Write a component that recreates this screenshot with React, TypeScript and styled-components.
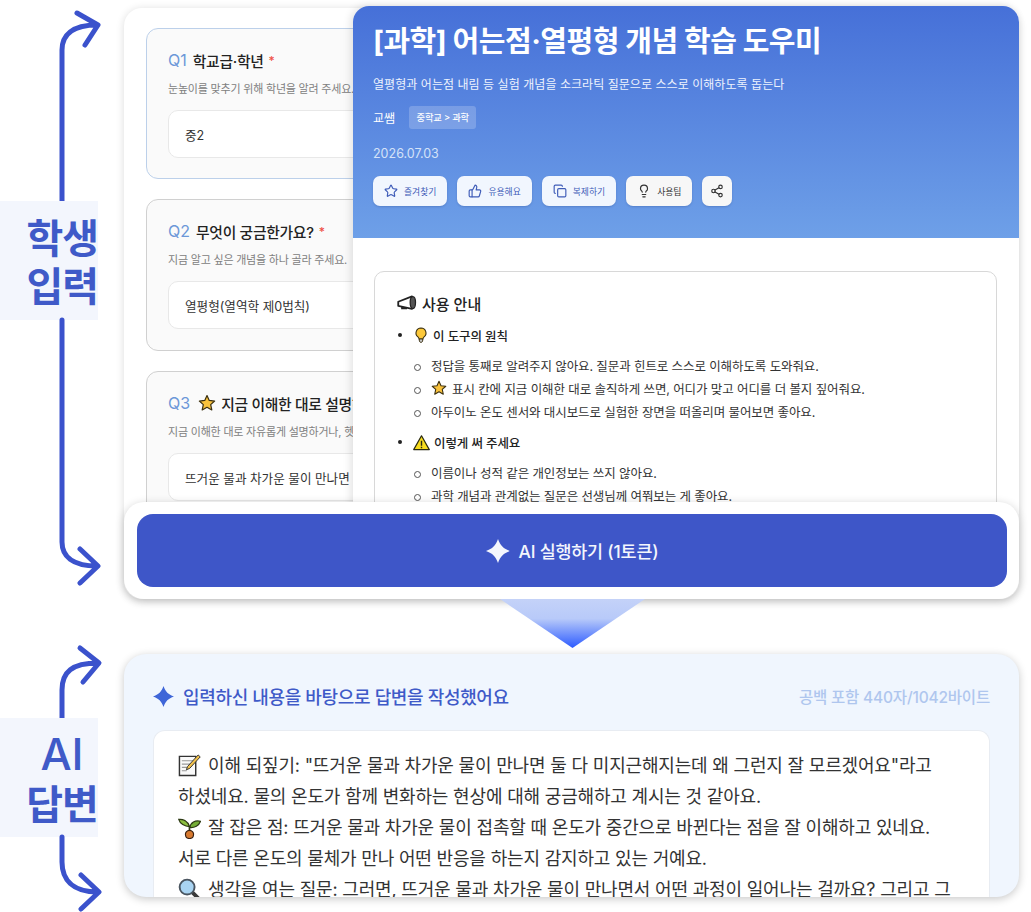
import React from 'react';
import styled, { createGlobalStyle } from 'styled-components';
import { Star, ThumbsUp, Copy, Lightbulb, Share2 } from 'lucide-react';

const Global = createGlobalStyle`
  html, body { margin: 0; padding: 0; background: #fff; }
  * { box-sizing: border-box; }
  body { font-family: "Inter", "Noto Sans CJK KR", sans-serif; color: #222; }
`;

const Page = styled.div`
  width: 1031px;
  height: 912px;
  overflow: hidden;
  background: #fff;
  padding-top: 8px;
`;
const Section = styled.section<{ $h: number }>`
  display: flex;
  height: ${p => p.$h}px;
  padding-right: 12px;
`;
const Rail = styled.div`
  width: 124px;
  flex: none;
  display: flex;
  flex-direction: column;
`;
const RailArrow = styled.svg<{ $h: number }>`
  display: block;
  width: 110px;
  height: ${p => p.$h}px;
  flex: none;
  overflow: visible;
  fill: none;
  stroke: #3b52cc;
  stroke-width: 5;
  stroke-linecap: round;
  stroke-linejoin: round;
`;
const RailLabel = styled.div<{ $h: number }>`
  width: 98px;
  height: ${p => p.$h}px;
  flex: none;
  background: #f3f6fd;
  color: #3f5ac8;
  font-family: "Noto Sans CJK KR", sans-serif;
  font-weight: 700;
  font-size: 40px;
  line-height: 48px;
  letter-spacing: -1px;
  text-align: right;
  padding: 11px 0 0 0;
`;
const RailLabelAi = styled(RailLabel)`
  text-align: center;
  padding: 12px 0 0 26px;
  span {
    display: block;
    font-family: "Inter", sans-serif;
    font-weight: 500;
    font-size: 44px;
    letter-spacing: 0;
  }
`;
const Stage = styled.div`
  position: relative;
  flex: 1;
`;
const FormCard = styled.div`
  height: 100%;
  background: #fff;
  border-radius: 18px;
  box-shadow: 0 1px 8px rgba(0,0,0,.14);
  padding: 20px 22px;
  display: flex;
  flex-direction: column;
  gap: 20px;
  overflow: hidden;
`;
const Question = styled.div<{ $active?: boolean }>`
  flex: none;
  height: ${p => p.$active ? 151 : 152}px;
  background: #fafafa;
  border: 1px solid ${p => p.$active ? '#bcd0ea' : '#d0d0d0'};
  border-radius: 12px;
  padding: 21px 21px 0;
`;
const QTitle = styled.div`
  display: flex;
  align-items: center;
  height: 20px;
  font-size: 14.8px;
  font-weight: 500;
  color: #222;
  white-space: nowrap;
  letter-spacing: -0.3px;
`;
const QNum = styled.span`
  color: #6c97d8;
  font-family: "Inter", sans-serif;
  font-weight: 400;
  font-size: 16px;
  letter-spacing: 0;
  margin-right: 6px;
`;
const Req = styled.span`
  color: #ef5046;
  font-size: 12px;
  margin-left: 5px;
`;
const QStar = styled.span`
  display: flex;
  margin: 0 5px 0 2px;
`;
const QHint = styled.div`
  margin-top: 11px;
  font-size: 11px;
  line-height: 16px;
  color: #808080;
  white-space: nowrap;
  letter-spacing: -0.2px;
`;
const Field = styled.div`
  margin-top: 13px;
  height: 48px;
  width: 260px;
  background: #fff;
  border: 1px solid #e8e8e8;
  border-radius: 10px;
  padding: 0 16px;
  display: flex;
  align-items: center;
  font-size: 12.6px;
  color: #333;
  white-space: nowrap;
`;
const Detail = styled.div`
  position: absolute;
  left: 229px;
  right: 0;
  top: -2px;
  bottom: 85px;
  background: #fff;
  border-radius: 16px 16px 0 0;
  box-shadow: -2px 0 8px rgba(0,0,0,.12);
  overflow: hidden;
`;
const DetailHead = styled.header`
  height: 232px;
  background: linear-gradient(180deg, #4670d8 0%, #6ea0e8 100%);
  padding: 18px 20px 0;
  color: #fff;
`;
const Title = styled.h1`
  margin: 0;
  font-size: 29px;
  line-height: 36px;
  font-weight: 700;
  letter-spacing: -0.5px;
  white-space: nowrap;
`;
const Sub = styled.p`
  margin: 16px 0 0;
  font-size: 12px;
  line-height: 18px;
  letter-spacing: 0.05px;
  color: #eef3fd;
`;
const AuthorRow = styled.div`
  display: flex;
  align-items: center;
  gap: 14px;
  margin-top: 11px;
  font-size: 12px;
  height: 24px;
`;
const Crumb = styled.span`
  background: rgba(255,255,255,.2);
  border-radius: 3px;
  height: 23px;
  padding: 0 7.5px;
  display: flex;
  align-items: center;
  font-size: 9.3px;
  font-weight: 500;
  letter-spacing: -0.2px;
`;
const DateText = styled.div`
  margin-top: 16px;
  font-size: 12.5px;
  line-height: 18px;
  color: #d4e2f8;
`;
const Actions = styled.div`
  display: flex;
  gap: 10px;
  margin-top: 13px;
`;
const ActionBtn = styled.button<{ $neutral?: boolean }>`
  height: 30px;
  padding: 0 11px;
  display: flex;
  align-items: center;
  gap: 6px;
  border: none;
  border-radius: 7px;
  background: ${p => p.$neutral ? '#f7f7f7' : '#f1f6fe'};
  color: ${p => p.$neutral ? '#333' : '#3f5cb8'};
  box-shadow: 0 1px 2px rgba(30,60,130,.25);
  font-family: inherit;
  font-size: 8.8px;
  white-space: nowrap;
`;
const ShareBtn = styled(ActionBtn)`
  padding: 0 8px;
`;
const DetailBody = styled.div`
  padding: 33px 22px 0 21px;
`;
const GuideBox = styled.div`
  height: 300px;
  border: 1px solid #d8d8d8;
  border-radius: 10px;
  padding: 19px 22px;
`;
const GuideTitle = styled.div`
  display: flex;
  align-items: center;
  gap: 5px;
  height: 24px;
  font-size: 15px;
  font-weight: 500;
  color: #222;
`;
const GuideList = styled.ul`
  list-style: none;
  margin: 8px 0 0;
  padding: 0;
`;
const GuideHead = styled.li`
  position: relative;
  display: flex;
  align-items: center;
  gap: 4px;
  height: 24px;
  padding-left: 16px;
  font-size: 12.5px;
  font-weight: 500;
  letter-spacing: -0.1px;
  color: #222;
  &::before {
    content: "";
    position: absolute;
    left: 1px;
    top: 10px;
    width: 4px;
    height: 4px;
    border-radius: 50%;
    background: #222;
  }
`;
const SubList = styled.ul`
  list-style: none;
  margin: 6.5px 0 7.5px;
  padding: 0 0 0 20px;
`;
const SubItem = styled.li`
  position: relative;
  display: flex;
  align-items: center;
  gap: 5px;
  height: 23px;
  padding-left: 14px;
  font-size: 12.5px;
  color: #333;
  letter-spacing: -0.1px;
  white-space: nowrap;
  &::before {
    content: "";
    position: absolute;
    left: -3px;
    top: 10px;
    width: 5px;
    height: 5px;
    border-radius: 50%;
    border: 1px solid #555;
  }
`;
const RunBar = styled.div`
  position: absolute;
  left: 0;
  right: 0;
  bottom: 0;
  height: 97px;
  background: #fff;
  border-radius: 20px;
  box-shadow: 0 2px 10px rgba(0,0,0,.2);
  padding: 12px 12px 12px 13px;
`;
const RunButton = styled.button`
  width: 100%;
  height: 73px;
  border: none;
  border-radius: 16px;
  background: #3e56c8;
  color: #f4f6fd;
  font-family: inherit;
  font-size: 17.4px;
  font-weight: 500;
  letter-spacing: -0.2px;
  display: flex;
  align-items: center;
  justify-content: center;
  gap: 9px;
`;
const Pointer = styled.div`
  width: 145px;
  height: 49px;
  margin: 0 0 6px 500px;
  background: linear-gradient(180deg, #c4d2f8 0%, #b8caf9 40%, #2d5bff 100%);
  clip-path: polygon(0 0, 100% 0, 50% 100%);
`;
const AnswerCard = styled.div`
  flex: 1;
  background: #f0f6fe;
  border-radius: 22px;
  box-shadow: 0 2px 8px rgba(0,0,0,.22);
  padding: 30px 29px 0;
  display: flex;
  flex-direction: column;
  overflow: hidden;
`;
const AnswerHead = styled.div`
  display: flex;
  align-items: center;
  justify-content: space-between;
  height: 24px;
  flex: none;
`;
const AnswerTitle = styled.div`
  display: flex;
  align-items: center;
  gap: 9px;
  color: #3f5ac8;
  font-size: 18px;
  font-weight: 500;
  letter-spacing: -0.35px;
`;
const AnswerMeta = styled.div`
  color: #afc6ee;
  font-size: 15.5px;
  font-weight: 500;
  letter-spacing: -0.2px;
`;
const AnswerBody = styled.div`
  margin-top: 22px;
  flex: 1;
  background: #fff;
  border: 1px solid #e8ecf2;
  border-bottom: none;
  border-radius: 12px 12px 0 0;
  padding: 19px 24px 0;
  font-size: 18px;
  line-height: 31px;
  letter-spacing: -0.18px;
  color: #333;
  white-space: nowrap;
  overflow: hidden;
`;
const Line = styled.div`
  display: flex;
  align-items: center;
  gap: 7px;
  height: 31px;
`;
const EmojiSvg = styled.svg<{ $s: number }>`
  width: ${p => p.$s}px;
  height: ${p => p.$s}px;
  flex: none;
  display: block;
`;

const Sparkle = ({ size, color }: { size: number; color: string }) => (
  <EmojiSvg $s={size} viewBox="0 0 24 24">
    <path fill={color} d="M12 0C14.200 6.500 17.500 9.800 24 12C17.500 14.200 14.200 17.500 12 24C9.800 17.500 6.500 14.200 0 12C6.500 9.800 9.800 6.500 12 0Z" />
  </EmojiSvg>
);
const StarEmoji = ({ size }: { size: number }) => (
  <EmojiSvg $s={size} viewBox="0 0 24 24">
    <path fill="#f9c23c" stroke="#3a2f10" strokeWidth="1.6" strokeLinejoin="round" d="M12 2l3 6.6 7.2.8-5.3 4.8 1.5 7.1L12 17.7l-6.4 3.6 1.5-7.1L1.8 9.4 9 8.6z" />
  </EmojiSvg>
);
const BulbEmoji = () => (
  <EmojiSvg $s={16} viewBox="0 0 24 24">
    <path fill="#fcc83a" stroke="#3a2f10" strokeWidth="1.6" d="M12 1.5a7.5 7.5 0 0 0-4.6 13.4c1.2 1 1.6 2 1.6 3h6c0-1 .4-2 1.6-3A7.5 7.5 0 0 0 12 1.5z" />
    <path fill="#c8c8c8" stroke="#3a2f10" strokeWidth="1.4" d="M9.5 18h5v3l-1.5 2h-2l-1.5-2z" />
  </EmojiSvg>
);
const WarnEmoji = () => (
  <EmojiSvg $s={17} viewBox="0 0 24 24">
    <path fill="#f7dc1e" stroke="#2a2a10" strokeWidth="1.7" strokeLinejoin="round" d="M12 2.5L23 22H1z" />
    <path stroke="#2a2a10" strokeWidth="2" d="M12 9.5v7M12 18v2" />
  </EmojiSvg>
);
const MegaEmoji = () => (
  <EmojiSvg $s={20} viewBox="0 0 24 24">
    <path fill="#fff" stroke="#222" strokeWidth="2.2" strokeLinejoin="round" d="M1.5 10.5L18 4v15L1.5 15.5z" />
    <path fill="#e66" d="M18 5.5v13c-1.5-1-2-4-2-6.500s.5-5.500 2-6.500z" />
    <ellipse cx="19" cy="11.500" rx="3.200" ry="7.200" fill="#555" stroke="#222" strokeWidth="1.500" />
    <path fill="none" stroke="#222" strokeWidth="2" d="M6 16v2.500h5V17.500" />
  </EmojiSvg>
);
const MemoEmoji = () => (
  <EmojiSvg $s={23} viewBox="0 0 24 24">
    <path fill="#fafafa" stroke="#333" strokeWidth="1.500" d="M1.500 2.500h17v20h-17z" />
    <path stroke="#999" strokeWidth="1.200" d="M4 7h12M4 10.500h9M4 14h6M4 17.500h5" />
    <path fill="#f2c14b" stroke="#333" strokeWidth="1" d="M21 1l2.200 2-11 12-3.500 1.500L10 13z" />
  </EmojiSvg>
);
const SproutEmoji = () => (
  <EmojiSvg $s={23} viewBox="0 0 24 24">
    <path fill="#8cbf3f" stroke="#2d3a14" strokeWidth="1.300" d="M12 11C10 5 5 3 .8 3.500 2 8 7 11 12 11z" />
    <path fill="#74ad35" stroke="#2d3a14" strokeWidth="1.300" d="M12.500 12C13 7 18 4 23.500 5.500 22 10 17 12.500 12.500 12z" />
    <path fill="none" stroke="#2d3a14" strokeWidth="1.800" d="M12 11v7" />
    <path fill="#d87a30" stroke="#3a2010" strokeWidth="1.200" d="M12 15c-3 0-4.500 2.500-4.200 4.500C8 22 10 23.500 12 23.500s4-1.500 4.200-4c.3-2-1.200-4.500-4.200-4.500z" />
  </EmojiSvg>
);
const LensEmoji = () => (
  <EmojiSvg $s={23} viewBox="0 0 24 24">
    <path stroke="#3a3a3a" strokeWidth="4" strokeLinecap="round" d="M15.500 15.500L22 22" />
    <circle cx="9.500" cy="9.500" r="7.800" fill="#a9d4f2" stroke="#4a5560" strokeWidth="2" />
  </EmojiSvg>
);

export default function App() {
  return (
    <Page>
      <Global />
      <Section $h={591}>
        <Rail>
          <RailArrow $h={193} viewBox="0 0 110 193">
            <path d="M62 193V42C62 27 72 17 97 17M77 5L98 17L85 37" />
          </RailArrow>
          <RailLabel $h={119}>학생<br />입력</RailLabel>
          <RailArrow $h={279} viewBox="0 0 110 279">
            <path d="M62 0V222C62 236 72 246 97 246M80 229L98 246L80 263" />
          </RailArrow>
        </Rail>
        <Stage>
          <FormCard>
            <Question $active>
              <QTitle><QNum>Q1</QNum>학교급·학년<Req>*</Req></QTitle>
              <QHint>눈높이를 맞추기 위해 학년을 알려 주세요.</QHint>
              <Field>중2</Field>
            </Question>
            <Question>
              <QTitle><QNum>Q2</QNum>무엇이 궁금한가요?<Req>*</Req></QTitle>
              <QHint>지금 알고 싶은 개념을 하나 골라 주세요.</QHint>
              <Field>열평형(열역학 제0법칙)</Field>
            </Question>
            <Question>
              <QTitle><QNum>Q3</QNum><QStar><StarEmoji size={18} /></QStar>지금 이해한 대로 설명하기</QTitle>
              <QHint>지금 이해한 대로 자유롭게 설명하거나, 헷갈리는 점을 적어 주세요.</QHint>
              <Field>뜨거운 물과 차가운 물이 만나면 둘 다 미지근해져요</Field>
            </Question>
          </FormCard>
          <Detail>
            <DetailHead>
              <Title>[과학] 어는점·열평형 개념 학습 도우미</Title>
              <Sub>열평형과 어는점 내림 등 실험 개념을 소크라틱 질문으로 스스로 이해하도록 돕는다</Sub>
              <AuthorRow>교쌤<Crumb>중학교 &gt; 과학</Crumb></AuthorRow>
              <DateText>2026.07.03</DateText>
              <Actions>
                <ActionBtn><Star size={14} />즐겨찾기</ActionBtn>
                <ActionBtn><ThumbsUp size={14} />유용해요</ActionBtn>
                <ActionBtn><Copy size={14} />복제하기</ActionBtn>
                <ActionBtn $neutral><Lightbulb size={14} />사용팁</ActionBtn>
                <ShareBtn $neutral><Share2 size={14} /></ShareBtn>
              </Actions>
            </DetailHead>
            <DetailBody>
              <GuideBox>
                <GuideTitle><MegaEmoji />사용 안내</GuideTitle>
                <GuideList>
                  <GuideHead><BulbEmoji />이 도구의 원칙</GuideHead>
                  <SubList>
                    <SubItem>정답을 통째로 알려주지 않아요. 질문과 힌트로 스스로 이해하도록 도와줘요.</SubItem>
                    <SubItem><StarEmoji size={16} />표시 칸에 지금 이해한 대로 솔직하게 쓰면, 어디가 맞고 어디를 더 볼지 짚어줘요.</SubItem>
                    <SubItem>아두이노 온도 센서와 대시보드로 실험한 장면을 떠올리며 물어보면 좋아요.</SubItem>
                  </SubList>
                  <GuideHead><WarnEmoji />이렇게 써 주세요</GuideHead>
                  <SubList>
                    <SubItem>이름이나 성적 같은 개인정보는 쓰지 않아요.</SubItem>
                    <SubItem>과학 개념과 관계없는 질문은 선생님께 여쭤보는 게 좋아요.</SubItem>
                  </SubList>
                </GuideList>
              </GuideBox>
            </DetailBody>
          </Detail>
          <RunBar>
            <RunButton><Sparkle size={24} color="#f4f6fd" />AI 실행하기 (1토큰)</RunButton>
          </RunBar>
        </Stage>
      </Section>
      <Pointer />
      <Section $h={243}>
        <Rail>
          <RailArrow $h={64} viewBox="0 0 110 64">
            <path d="M62 64V36C62 18 72 9 98 9M80 -6L99 9L83 28" />
          </RailArrow>
          <RailLabelAi $h={119}><span>AI</span>답변</RailLabelAi>
          <RailArrow $h={60} viewBox="0 0 110 60">
            <path d="M62 0V25C62 42 72 55 98 55M81 38L99 55L81 72" />
          </RailArrow>
        </Rail>
        <AnswerCard>
          <AnswerHead>
            <AnswerTitle><Sparkle size={21} color="#3f66d8" />입력하신 내용을 바탕으로 답변을 작성했어요</AnswerTitle>
            <AnswerMeta>공백 포함 440자/1042바이트</AnswerMeta>
          </AnswerHead>
          <AnswerBody>
            <Line><MemoEmoji />이해 되짚기: "뜨거운 물과 차가운 물이 만나면 둘 다 미지근해지는데 왜 그런지 잘 모르겠어요"라고</Line>
            <Line>하셨네요. 물의 온도가 함께 변화하는 현상에 대해 궁금해하고 계시는 것 같아요.</Line>
            <Line><SproutEmoji />잘 잡은 점: 뜨거운 물과 차가운 물이 접촉할 때 온도가 중간으로 바뀐다는 점을 잘 이해하고 있네요.</Line>
            <Line>서로 다른 온도의 물체가 만나 어떤 반응을 하는지 감지하고 있는 거예요.</Line>
            <Line><LensEmoji />생각을 여는 질문: 그러면, 뜨거운 물과 차가운 물이 만나면서 어떤 과정이 일어나는 걸까요? 그리고 그</Line>
          </AnswerBody>
        </AnswerCard>
      </Section>
    </Page>
  );
}
